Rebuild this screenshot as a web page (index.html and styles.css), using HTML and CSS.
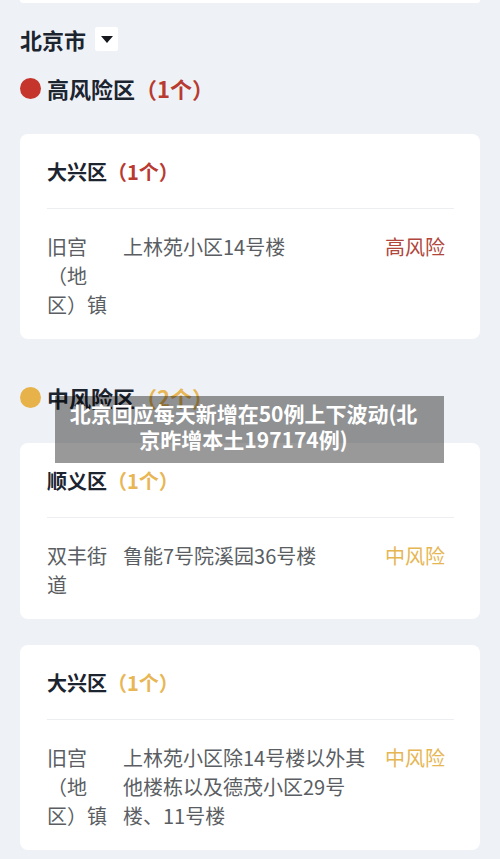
FILE: index.html
```html
<!DOCTYPE html>
<html>
<head>
	<meta charset="utf-8">
	<title>北京市风险区</title>
	<link rel="stylesheet" href="styles.css">
</head>
<body>
	<div class="prev-card"></div>

	<div class="city">
		<span>北京市</span>
		<span class="city-select"><i class="caret"></i></span>
	</div>

	<h2 class="level level-high"><i class="dot"></i>高风险区<span class="count">（1个）</span></h2>

	<div class="card high">
		<div class="card-title">大兴区<span class="count">（1个）</span></div>
		<div class="row">
			<div class="town">旧宫（地区）镇</div>
			<div class="place">上林苑小区14号楼</div>
			<div class="risk">高风险</div>
		</div>
	</div>

	<h2 class="level level-mid"><i class="dot"></i>中风险区<span class="count">（2个）</span></h2>

	<div class="card mid">
		<div class="card-title">顺义区<span class="count">（1个）</span></div>
		<div class="row">
			<div class="town">双丰街道</div>
			<div class="place">鲁能7号院溪园36号楼</div>
			<div class="risk">中风险</div>
		</div>
	</div>

	<div class="card mid">
		<div class="card-title">大兴区<span class="count">（1个）</span></div>
		<div class="row">
			<div class="town">旧宫（地区）镇</div>
			<div class="place">上林苑小区除14号楼以外其他楼栋以及德茂小区29号楼、11号楼</div>
			<div class="risk">中风险</div>
		</div>
	</div>

	<div class="caption">北京回应每天新增在50例上下波动(北京昨增本土197174例)</div>
</body>
</html>
```

FILE: styles.css
```css
body {
	margin: 0;
	padding: 0 20px 20px 20px;
	background-color: #eef2f6;
	font-family: "Noto Sans CJK SC", "Noto Sans", sans-serif;
	color: #1c2430;
}

.prev-card {
	height: 3px;
	background: #fff;
	border-radius: 0 0 8px 8px;
}

.city {
	display: flex;
	align-items: center;
	margin-top: 24px;
	height: 24px;
	font-size: 22px;
	font-weight: 700;
	line-height: 24px;
}

.city-select {
	display: flex;
	align-items: center;
	justify-content: center;
	width: 23px;
	height: 24px;
	margin-left: 9px;
	background: #fff;
	border-radius: 2px;
}

.caret {
	width: 0;
	height: 0;
	border-left: 6px solid transparent;
	border-right: 6px solid transparent;
	border-top: 7px solid #15191f;
}

.level {
	display: flex;
	align-items: center;
	margin: 25px 0 34px 0;
	height: 24px;
	font-size: 22px;
	font-weight: 700;
	line-height: 24px;
}

.level-mid {
	margin-top: 46px;
}

.dot {
	width: 21px;
	height: 21px;
	border-radius: 50%;
	margin-right: 6px;
}

.level-high .dot { background: #c5352b; }
.level-high .count { color: #b93a30; }
.level-mid .dot { background: #e8b24a; }
.level-mid .count { color: #e8b654; }

.card {
	background: #fff;
	border-radius: 8px;
	padding: 0 26px 20px 27px;
	margin-bottom: 26px;
}

.card-title {
	padding: 24px 0 22px 0;
	border-bottom: 1px solid #eceef1;
	font-size: 20px;
	font-weight: 700;
	line-height: 28px;
}

.high .count { color: #b93a30; }
.mid .count { color: #e8b654; }

.row {
	display: grid;
	grid-template-columns: 60px 1fr 60px;
	column-gap: 16px;
	padding: 23px 9px 0 0;
	font-size: 20px;
	line-height: 29px;
	color: #5a5e63;
}

.high .risk { color: #b0463c; }
.mid .risk { color: #e6b653; }

.caption {
	position: absolute;
	top: 396px;
	left: 55px;
	width: 389px;
	box-sizing: border-box;
	padding: 5px 20px 11px 8px;
	background: rgba(0, 0, 0, 0.4);
	color: #fff;
	font-size: 21px;
	font-weight: 700;
	line-height: 25.5px;
	text-align: center;
}
```
